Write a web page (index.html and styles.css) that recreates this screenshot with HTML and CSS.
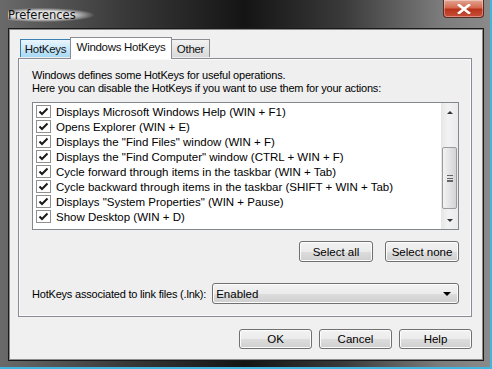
FILE: index.html
```html
<!DOCTYPE html>
<html lang="en">
<head>
    <meta charset="UTF-8">
    <meta name="viewport" content="width=device-width, initial-scale=1.0">
    <title>Preferences</title>
    <link rel="stylesheet" href="styles.css">
</head>
<body>
    <div class="window">
        <div class="titlebar">
            <span class="title">Preferences</span>
            <div class="close-btn">
                <svg width="14" height="10" viewBox="0 0 14 10"><path d="M2 1 L12 9 M12 1 L2 9" stroke="#fff" stroke-width="2.6" stroke-linecap="square"/></svg>
            </div>
        </div>

        <div class="client">
            <div class="tabs">
                <div class="tab first">HotKeys</div>
                <div class="tab active">Windows HotKeys</div>
                <div class="tab last">Other</div>
            </div>

            <div class="panel">
                <p class="intro">Windows defines some HotKeys for useful operations.<br>Here you can disable the HotKeys if you want to use them for your actions:</p>

                <div class="listbox">
                    <div class="items" id="items"></div>
                    <div class="scrollbar">
                        <div class="arrow up"></div>
                        <div class="track">
                            <div class="thumb"><span class="grip"></span></div>
                        </div>
                        <div class="arrow down"></div>
                    </div>
                </div>

                <div class="btn-row">
                    <button class="btn">Select all</button>
                    <button class="btn">Select none</button>
                </div>

                <div class="combo-row">
                    <label>HotKeys associated to link files (.lnk):</label>
                    <div class="combo">
                        <span>Enabled</span>
                        <span class="caret"></span>
                    </div>
                </div>
            </div>

            <div class="footer">
                <button class="btn">OK</button>
                <button class="btn">Cancel</button>
                <button class="btn">Help</button>
            </div>
        </div>
    </div>

    <script>
        const hotkeys = [
            'Displays Microsoft Windows Help (WIN + F1)',
            'Opens Explorer (WIN + E)',
            'Displays the "Find Files" window (WIN + F)',
            'Displays the "Find Computer" window (CTRL + WIN + F)',
            'Cycle forward through items in the taskbar (WIN + Tab)',
            'Cycle backward through items in the taskbar (SHIFT + WIN + Tab)',
            'Displays "System Properties" (WIN + Pause)',
            'Show Desktop (WIN + D)'
        ];

        let list = document.getElementById('items');
        hotkeys.forEach(text => {
            let row = document.createElement('div');
            row.className = 'item';
            row.innerHTML = '<span class="check"><svg width="11" height="9" viewBox="0 0 11 9"><path d="M1.5 4.5 L4 7 L9.5 1.5" fill="none" stroke="#1a1a1a" stroke-width="2"/></svg></span>';
            let label = document.createElement('span');
            label.textContent = text;
            row.appendChild(label);
            list.appendChild(row);
        });
    </script>
</body>
</html>
```

FILE: styles.css
```css
* {
    box-sizing: border-box;
}
body {
    margin: 0;
    font-family: "Liberation Sans", Arial, sans-serif;
    font-size: 11px;
    color: #000;
    background: #fff;
}
.window {
    width: 492px;
    height: 369px;
    display: flex;
    flex-direction: column;
    background: linear-gradient(to right, #6a6a6a 0%, #3a3a3a 25%, #141414 50%, #3a3a3a 70%, #7c7c7c 90%, #8a8a8a 100%);
    border-right: 2px solid #3fb7e0;
    border-bottom: 2px solid #3fb7e0;
    padding: 0 6px 6px 8px;
}
.titlebar {
    height: 28px;
    display: flex;
    align-items: flex-start;
    justify-content: space-between;
}
.title {
    margin-top: 8px;
    font-family: "DejaVu Sans", sans-serif;
    font-size: 11.5px;
    color: #111;
    padding: 0 18px 0 0;
    background: radial-gradient(ellipse at 40% 50%, rgba(230,230,230,0.95) 40%, rgba(230,230,230,0) 72%);
}
.close-btn {
    width: 41px;
    height: 18px;
    border: 1px solid #5a2a20;
    border-top: none;
    border-radius: 0 0 4px 4px;
    background: linear-gradient(to bottom, #e4a594 0%, #d46a50 45%, #b8321a 55%, #c8503a 100%);
    display: flex;
    align-items: center;
    justify-content: center;
    box-shadow: inset 0 0 0 1px rgba(255,255,255,0.35);
}
.client {
    flex: 1;
    background: #f0f0f0;
    border: 1px solid #1a1a1a;
    box-shadow: inset 0 0 0 1px #8c8c8c;
    padding: 8px 11px 0 9px;
    display: flex;
    flex-direction: column;
}
.tabs {
    display: flex;
    align-items: flex-end;
    height: 21px;
    padding-left: 2px;
    position: relative;
    z-index: 1;
}
.tab {
    height: 18px;
    padding-top: 3px;
    text-align: center;
    border: 1px solid #8b8d91;
    border-bottom: none;
    background: linear-gradient(to bottom, #f2f2f2, #d9d9d9);
    font-size: 11.5px;
    letter-spacing: -0.3px;
    color: #111;
    margin-bottom: 1px;
}
.tab.first {
    width: 50px;
    background: linear-gradient(to bottom, #eaf6fd, #a7d9f5);
    border-color: #3c7fb1;
    border-right: none;
}
.tab.active {
    width: 102px;
    height: 22px;
    background: #fff;
    margin-bottom: -1px;
    border-color: #898c95;
}
.tab.last {
    width: 38px;
    border-left: none;
}
.panel {
    width: 454px;
    height: 259px;
    background: #efefef;
    border: 1px solid #898c95;
    box-shadow: inset 0 0 0 1px #fafafa;
    padding: 10px 12px 0 13px;
}
.intro {
    margin: 0;
    line-height: 13px;
    font-size: 11px;
    letter-spacing: -0.2px;
}
.listbox {
    margin-top: 7px;
    height: 128px;
    border: 1px solid #828790;
    background: #fff;
    display: flex;
}
.items {
    flex: 1;
    padding: 1px 0 0 3px;
}
.item {
    height: 15px;
    display: flex;
    align-items: center;
    gap: 5px;
    font-size: 11.5px;
}
.check {
    width: 15px;
    height: 13px;
    border: 1px solid #8f8f8f;
    background: #fff;
    display: flex;
    align-items: center;
    justify-content: center;
}
.scrollbar {
    width: 17px;
    display: flex;
    flex-direction: column;
    background: linear-gradient(to right, #e6e6e6, #f2f2f2 40%, #eaeaea);
}
.arrow {
    height: 18px;
    display: flex;
    align-items: center;
    justify-content: center;
}
.arrow::after {
    content: "";
    border-left: 3px solid transparent;
    border-right: 3px solid transparent;
}
.arrow.up::after {
    border-bottom: 3px solid #333;
}
.arrow.down::after {
    border-top: 3px solid #333;
}
.track {
    flex: 1;
    padding-top: 26px;
}
.thumb {
    height: 62px;
    margin: 0 1px;
    border: 1px solid #9b9b9b;
    border-radius: 2px;
    background: linear-gradient(to right, #f3f3f3, #e3e3e3 50%, #d3d3d3);
    display: flex;
    align-items: center;
    justify-content: center;
}
.grip {
    width: 6px;
    height: 7px;
    border-top: 1px solid #666;
    border-bottom: 1px solid #666;
    background: linear-gradient(to bottom, transparent 2px, #666 2px, #666 3px, transparent 3px, transparent 4px, #666 4px, #666 5px, transparent 5px);
}
.btn-row {
    display: flex;
    justify-content: flex-end;
    gap: 12px;
    margin-top: 11px;
}
.btn {
    width: 74px;
    height: 21px;
    padding: 0;
    border: 1px solid #707070;
    border-radius: 3px;
    background: linear-gradient(to bottom, #f2f2f2 0%, #ebebeb 50%, #dddddd 51%, #cfcfcf 100%);
    box-shadow: inset 0 0 0 1px #fcfcfc;
    font-family: "Liberation Sans", Arial, sans-serif;
    font-size: 11.5px;
    color: #000;
}
.combo-row {
    display: flex;
    align-items: center;
    margin-top: 21px;
    gap: 6px;
}
.combo-row label {
    font-size: 11px;
    letter-spacing: -0.2px;
}
.combo {
    flex: 1;
    height: 21px;
    border: 1px solid #707070;
    border-radius: 3px;
    background: linear-gradient(to bottom, #f2f2f2 0%, #ebebeb 50%, #dddddd 51%, #cfcfcf 100%);
    box-shadow: inset 0 0 0 1px #fcfcfc;
    display: flex;
    align-items: center;
    justify-content: space-between;
    padding: 0 7px 0 3px;
    font-size: 11.5px;
}
.caret {
    border-left: 4px solid transparent;
    border-right: 4px solid transparent;
    border-top: 4px solid #000;
}
.footer {
    display: flex;
    justify-content: flex-end;
    gap: 7px;
    margin-top: 12px;
}
.footer .btn {
    width: 73px;
    height: 20px;
}
```
